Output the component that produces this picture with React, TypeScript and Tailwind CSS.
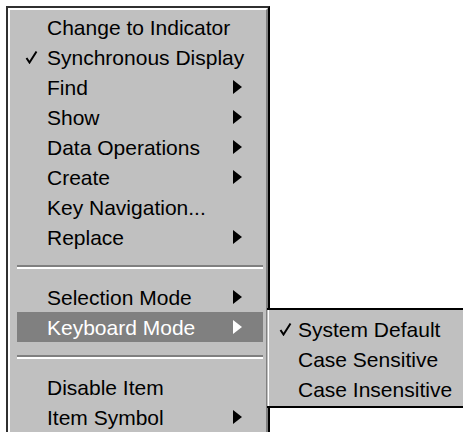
import React from 'react';

type Item =
  | { kind: 'item'; label: string; checked?: boolean; sub?: boolean; active?: boolean }
  | { kind: 'sep' };

const mainItems: Item[] = [
  { kind: 'item', label: 'Change to Indicator' },
  { kind: 'item', label: 'Synchronous Display', checked: true },
  { kind: 'item', label: 'Find', sub: true },
  { kind: 'item', label: 'Show', sub: true },
  { kind: 'item', label: 'Data Operations', sub: true },
  { kind: 'item', label: 'Create', sub: true },
  { kind: 'item', label: 'Key Navigation...' },
  { kind: 'item', label: 'Replace', sub: true },
  { kind: 'sep' },
  { kind: 'item', label: 'Selection Mode', sub: true },
  { kind: 'item', label: 'Keyboard Mode', sub: true, active: true },
  { kind: 'sep' },
  { kind: 'item', label: 'Disable Item' },
  { kind: 'item', label: 'Item Symbol', sub: true },
];

const subItems = [
  { label: 'System Default', checked: true },
  { label: 'Case Sensitive' },
  { label: 'Case Insensitive' },
];

function Check({ white }: { white?: boolean }) {
  return (
    <svg width="13" height="14" viewBox="0 0 13 14" className="block">
      <path
        d="M1.5 8 L4.5 12.5 L11.5 1.5"
        fill="none"
        stroke={white ? '#fff' : '#000'}
        strokeWidth="2"
      />
    </svg>
  );
}

function Arrow({ white }: { white?: boolean }) {
  return (
    <svg width="9" height="14" viewBox="0 0 9 14" className="block">
      <polygon points="0,0 9,7 0,14" fill={white ? '#fff' : '#000'} />
    </svg>
  );
}

function MenuRow({ item }: { item: Extract<Item, { kind: 'item' }> }) {
  return (
    <div
      className={
        'flex h-[30px] items-center ' +
        (item.active ? 'bg-[#808080] text-white' : 'text-black')
      }
    >
      <div className="flex w-[30px] shrink-0 justify-end pr-[9px]">
        {item.checked && <Check white={item.active} />}
      </div>
      <span className="min-w-0 flex-1 whitespace-nowrap leading-none">{item.label}</span>
      <div className="flex w-[30px] shrink-0 justify-start">
        {item.sub && <Arrow white={item.active} />}
      </div>
    </div>
  );
}

function Separator() {
  return (
    <div className="flex h-[30px] flex-col justify-center">
      <div className="h-[2px] bg-[#808080]" />
      <div className="h-[2px] bg-white" />
    </div>
  );
}

export default function App() {
  return (
    <div
      className="relative h-[433px] w-[463px] overflow-hidden bg-white text-[21px]"
      style={{ fontFamily: '"Liberation Sans", Arial, sans-serif' }}
    >
      <div className="ml-[6px] mt-[6px] w-[264px] border-l-2 border-t-2 border-r-2 border-l-[#303030] border-t-[#303030] border-r-black">
        <div className="border-l-2 border-t-2 border-r-2 border-l-white border-t-white border-r-[#808080] bg-[#c0c0c0] pl-[7px] pr-[3px] pt-[2px]">
          {mainItems.map((it, i) =>
            it.kind === 'sep' ? (
              <Separator key={i} />
            ) : (
              <MenuRow key={i} item={it} />
            )
          )}
        </div>
      </div>

      {/* submenu for Keyboard Mode */}
      <div className="absolute left-[267px] top-[308px] w-[210px] border-t-2 border-b-2 border-t-black border-b-black">
        <div className="border-l-[1px] border-l-[#c0c0c0]">
          <div className="border-l-[1px] border-l-white bg-[#c0c0c0] pb-[2px] pt-[4px]">
            {subItems.map((s, i) => (
              <div key={i} className="flex h-[30px] items-center text-black">
                <div className="flex w-[29px] justify-end pr-[6px]">
                  {s.checked && <Check />}
                </div>
                <span className="whitespace-nowrap leading-none">{s.label}</span>
              </div>
            ))}
          </div>
        </div>
      </div>
    </div>
  );
}
